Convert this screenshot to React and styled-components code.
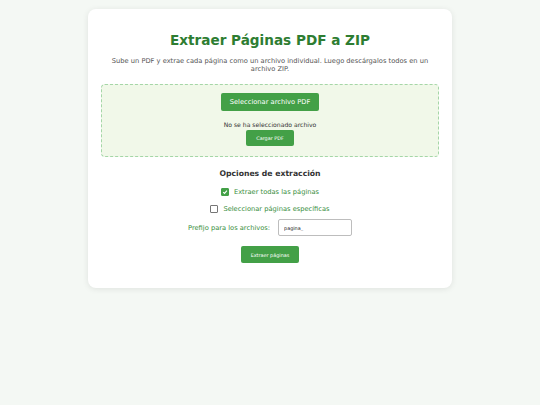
import React from 'react'
import styled, { createGlobalStyle } from 'styled-components'

const GlobalStyle = createGlobalStyle`
    html, body {
        margin: 0;
        padding: 0;
        background-color: #F4F8F4;
        font-family: "DejaVu Sans", Verdana, sans-serif;
    }
`;

const Page = styled.div`
    min-height: 405px;
    padding-top: 9px;
    box-sizing: border-box;
`;

const Card = styled.div`
    width: 364px;
    margin: 0 auto;
    box-sizing: border-box;
    padding: 21px 13px 25px;
    background: #fff;
    border-radius: 8px;
    box-shadow: 0 1px 6px rgba(0, 0, 0, 0.09);
    text-align: center;
`;

const Title = styled.h1`
    margin: 2px 0 0;
    font-size: 13.6px;
    line-height: 16px;
    font-weight: bold;
    color: #2E7D32;
`;

const Subtitle = styled.p`
    margin: 9px 0 0;
    padding: 0 8px;
    font-size: 6.7px;
    line-height: 8px;
    color: #555;
`;

const DropZone = styled.div`
    margin-top: 11px;
    padding: 8px 0 10px;
    border: 1px dashed #A5D6A7;
    border-radius: 4px;
    background: #F1F8E9;
    display: flex;
    flex-direction: column;
    align-items: center;
`;

const Button = styled.button`
    display: block;
    border: none;
    border-radius: 2px;
    background: #43A047;
    color: #fff;
    font-family: inherit;
    font-size: ${p => p.$big ? '6.7px' : '4.9px'};
    height: ${p => p.$h}px;
    width: ${p => p.$w}px;
    padding: 0;
    cursor: pointer;
`;

const FileName = styled.div`
    margin: 10px 0 1px;
    font-size: 6.1px;
    line-height: 8px;
    color: #333;
`;

const OptionsTitle = styled.h3`
    margin: 11px 0 0;
    font-size: 7.7px;
    line-height: 11px;
    font-weight: bold;
    color: #333;
`;

const CheckRow = styled.label`
    display: flex;
    justify-content: center;
    align-items: center;
    gap: 5px;
    margin-top: ${p => p.$mt}px;
    height: 9px;
    font-size: 6.7px;
    color: #388E3C;
`;

const Box = styled.span`
    width: 8px;
    height: 8px;
    box-sizing: border-box;
    border-radius: 1px;
    display: flex;
    align-items: center;
    justify-content: center;
    background: ${p => p.$on ? '#43A047' : '#fff'};
    border: 1px solid ${p => p.$on ? '#43A047' : '#767676'};
`;

const PrefixRow = styled.div`
    display: flex;
    justify-content: center;
    align-items: center;
    gap: 8px;
    margin-top: 6px;
    font-size: 6.7px;
    color: #388E3C;
`;

const PrefixInput = styled.input`
    width: 74px;
    height: 17px;
    box-sizing: border-box;
    border: 1px solid #BDBDBD;
    border-radius: 2px;
    padding: 0 5px;
    font-family: inherit;
    font-size: 4.9px;
    color: #222;
`;

const Actions = styled.div`
    display: flex;
    justify-content: center;
    margin-top: 10px;
`;

const Check = () => (
    <svg width="6" height="6" viewBox="0 0 10 10">
        <path d="M2 5.2 L4.2 7.4 L8.2 2.8" stroke="#fff" strokeWidth="1.8" fill="none" />
    </svg>
);

const App = () => {
    return (
        <Page>
            <GlobalStyle />
            <Card>
                <Title>Extraer Páginas PDF a ZIP</Title>
                <Subtitle>Sube un PDF y extrae cada página como un archivo individual. Luego descárgalos todos en un archivo ZIP.</Subtitle>

                <DropZone>
                    <Button $big $w={98} $h={18}>Seleccionar archivo PDF</Button>
                    <FileName>No se ha seleccionado archivo</FileName>
                    <Button $w={48} $h={16}>Cargar PDF</Button>
                </DropZone>

                <OptionsTitle>Opciones de extracción</OptionsTitle>
                <CheckRow $mt={8}>
                    <Box $on><Check /></Box>
                    Extraer todas las páginas
                </CheckRow>
                <CheckRow $mt={8}>
                    <Box />
                    Seleccionar páginas específicas
                </CheckRow>
                <PrefixRow>
                    <span>Prefijo para los archivos:</span>
                    <PrefixInput defaultValue="pagina_" />
                </PrefixRow>
                <Actions>
                    <Button $w={58} $h={17}>Extraer páginas</Button>
                </Actions>
            </Card>
        </Page>
    )
}

export default App
